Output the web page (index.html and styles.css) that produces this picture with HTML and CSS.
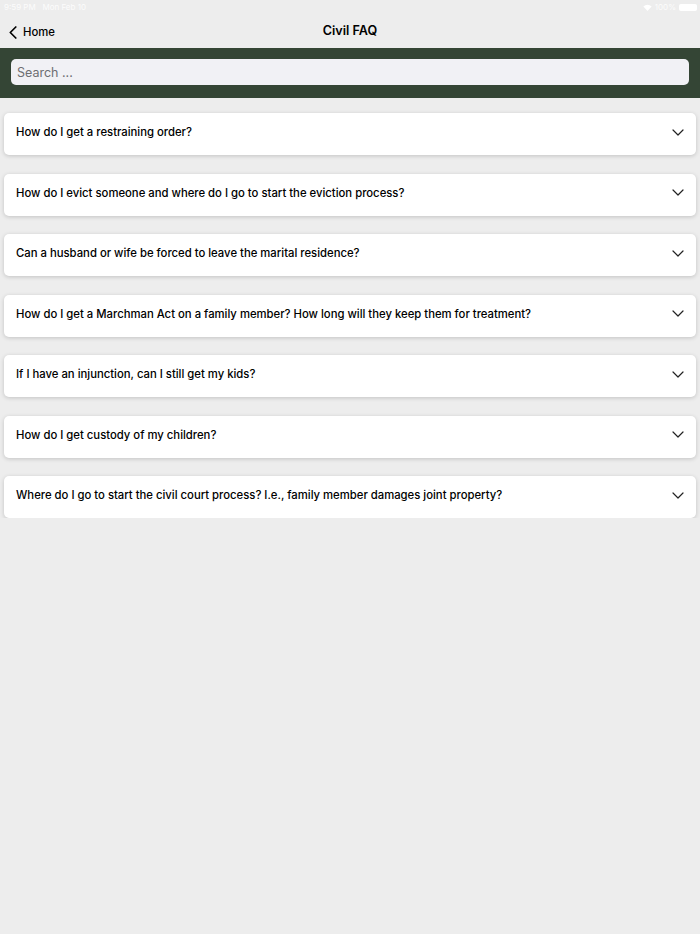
FILE: index.html
```html
<!DOCTYPE html>
<html>
<head>
<meta charset="utf-8">
<link rel="stylesheet" href="styles.css">
</head>
<body>
<div class="status">
  <div class="status-left">9:59 PM&nbsp;&nbsp;&nbsp;Mon Feb 10</div>
  <div class="status-right">
    <svg class="wifi" width="9" height="7" viewBox="0 0 12 9"><path d="M6 9 L0.5 3 A8 8 0 0 1 11.5 3 Z" fill="#fff"/></svg>
    <span>100%</span>
    <span class="battery"></span>
  </div>
</div>
<header class="nav">
  <a class="back">
    <svg width="8" height="13" viewBox="0 0 8 13"><path d="M6.8 1 L1.3 6.5 L6.8 12" fill="none" stroke="#000" stroke-width="1.7" stroke-linecap="round" stroke-linejoin="round"/></svg>
    <span>Home</span>
  </a>
  <div class="title">Civil FAQ</div>
</header>
<div class="searchbar">
  <input class="search" type="text" placeholder="Search ...">
</div>
<main class="list">
  <div class="card"><span>How do I get a restraining order?</span><svg class="chev" width="12" height="7" viewBox="0 0 12 7"><path d="M1 1 L6 6 L11 1" fill="none" stroke="#222" stroke-width="1.2" stroke-linecap="round" stroke-linejoin="round"/></svg></div>
  <div class="card"><span>How do I evict someone and where do I go to start the eviction process?</span><svg class="chev" width="12" height="7" viewBox="0 0 12 7"><path d="M1 1 L6 6 L11 1" fill="none" stroke="#222" stroke-width="1.2" stroke-linecap="round" stroke-linejoin="round"/></svg></div>
  <div class="card"><span>Can a husband or wife be forced to leave the marital residence?</span><svg class="chev" width="12" height="7" viewBox="0 0 12 7"><path d="M1 1 L6 6 L11 1" fill="none" stroke="#222" stroke-width="1.2" stroke-linecap="round" stroke-linejoin="round"/></svg></div>
  <div class="card"><span>How do I get a Marchman Act on a family member? How long will they keep them for treatment?</span><svg class="chev" width="12" height="7" viewBox="0 0 12 7"><path d="M1 1 L6 6 L11 1" fill="none" stroke="#222" stroke-width="1.2" stroke-linecap="round" stroke-linejoin="round"/></svg></div>
  <div class="card"><span>If I have an injunction, can I still get my kids?</span><svg class="chev" width="12" height="7" viewBox="0 0 12 7"><path d="M1 1 L6 6 L11 1" fill="none" stroke="#222" stroke-width="1.2" stroke-linecap="round" stroke-linejoin="round"/></svg></div>
  <div class="card"><span>How do I get custody of my children?</span><svg class="chev" width="12" height="7" viewBox="0 0 12 7"><path d="M1 1 L6 6 L11 1" fill="none" stroke="#222" stroke-width="1.2" stroke-linecap="round" stroke-linejoin="round"/></svg></div>
  <div class="card"><span>Where do I go to start the civil court process? I.e., family member damages joint property?</span><svg class="chev" width="12" height="7" viewBox="0 0 12 7"><path d="M1 1 L6 6 L11 1" fill="none" stroke="#222" stroke-width="1.2" stroke-linecap="round" stroke-linejoin="round"/></svg></div>
</main>
</body>
</html>
```
FILE: styles.css
```css
* { box-sizing: border-box; }
html, body {
  margin: 0;
  padding: 0;
  background: #ededed;
  font-family: Inter, "Liberation Sans", sans-serif;
  color: #000;
}
.status {
  height: 14px;
  display: flex;
  justify-content: space-between;
  align-items: center;
  padding: 0 3px 0 4px;
  font-size: 8px;
  color: rgba(255,255,255,0.85);
}
.status-right {
  display: flex;
  align-items: center;
  gap: 3px;
}
.battery {
  width: 18px;
  height: 7px;
  border-radius: 2px;
  background: #fff;
  display: inline-block;
}
.nav {
  height: 34px;
  position: relative;
  display: flex;
  align-items: center;
  justify-content: center;
}
.back {
  position: absolute;
  left: 9px;
  top: 11px;
  display: flex;
  align-items: center;
  gap: 6px;
  font-size: 11.3px;
  font-weight: 500;
}
.title {
  font-size: 12.6px;
  font-weight: 600;
  margin-top: -1px;
}
.searchbar {
  background: #344535;
  height: 50px;
  padding: 11px 11px 0 11px;
}
.search {
  display: block;
  width: 100%;
  height: 26px;
  border: none;
  border-radius: 5px;
  background: #f1f1f5;
  padding: 0 6px;
  font-family: inherit;
  font-size: 12.5px;
  outline: none;
}
.search::placeholder { color: #6e6e72; }
.list {
  padding: 15px 4px 0 4px;
  display: flex;
  flex-direction: column;
  gap: 18.5px;
}
.card {
  height: 42px;
  background: #fff;
  border-radius: 5px;
  box-shadow: 0 1px 4px rgba(0,0,0,0.18);
  display: flex;
  align-items: center;
  justify-content: space-between;
  padding: 0 12px 4px 12px;
  font-size: 11.3px;
  font-weight: 500;
}
```
